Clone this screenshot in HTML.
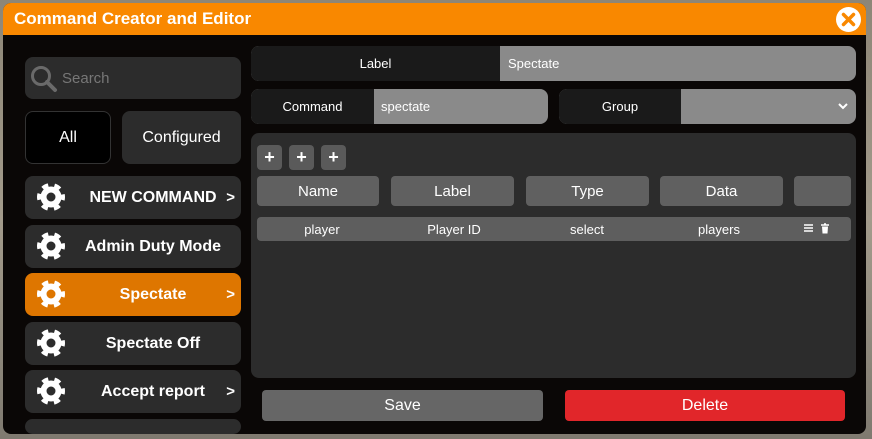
<!DOCTYPE html>
<html><head><meta charset="utf-8"><style>
*{margin:0;padding:0;box-sizing:border-box}
html,body{width:872px;height:439px;overflow:hidden}
body{background:linear-gradient(180deg,#8d8677,#a39b8b 50%,#7f7a70);font-family:"Liberation Sans",sans-serif;position:relative}
.win{position:absolute;left:3px;top:3px;width:863px;height:431px;background:#0a0706;border-radius:8px;overflow:hidden}
.title{position:absolute;left:0;top:0;width:100%;height:32px;background:#f98800;color:#fff;font-weight:bold;font-size:17px;line-height:32px;padding-left:11px}
.close{position:absolute;right:5px;top:4px;width:25px;height:25px;border-radius:50%;background:#fff}
.a{position:absolute}
.box{position:absolute;border-radius:8px}
.c{display:flex;align-items:center;justify-content:center;color:#fff}
.item{position:absolute;left:22px;width:216px;height:43px;background:#2c2c2c;border-radius:8px;color:#fff;font-weight:bold;font-size:16px}
.item .t{position:absolute;left:40px;right:0;top:0;height:43px;display:flex;align-items:center;justify-content:center}
.item svg{position:absolute;left:11px;top:6px}
.item .ar{position:absolute;right:6px;top:13px;font-size:15px;font-weight:bold}
.hd{position:absolute;top:173px;height:30px;background:#606060;border-radius:4px;color:#fff;font-size:15px}
.pl{position:absolute;top:142px;width:25px;height:25px;background:#5a5a5a;border-radius:4px;color:#fff;font-size:18px;font-weight:bold}
.cell{position:absolute;top:214px;height:24px;color:#fff;font-size:13px}
</style></head><body>
<svg width="0" height="0" style="position:absolute;left:0;top:0"><defs><g id="g"><circle cx="15" cy="15" r="11.5" fill="none" stroke="#fff" stroke-width="5" stroke-dasharray="6 6.04" stroke-dashoffset="3"/><circle cx="15" cy="15" r="7.5" fill="none" stroke="#fff" stroke-width="6"/></g></defs></svg>
<div class="win">
<div class="title">Command Creator and Editor</div>
<div class="close"><svg width="25" height="25"><path d="M7.5 7.5L17.5 17.5M17.5 7.5L7.5 17.5" stroke="#f98800" stroke-width="3.5" stroke-linecap="round"/></svg></div>

<div class="box" style="left:22px;top:54px;width:216px;height:42px;background:#2c2c2c"></div>
<svg class="a" style="left:26px;top:61px" width="30" height="30"><circle cx="12" cy="12" r="8.5" fill="none" stroke="#6a6a6a" stroke-width="3"/><path d="M18 18L26 26" stroke="#6a6a6a" stroke-width="4" stroke-linecap="round"/></svg>
<div class="a" style="left:59px;top:67px;color:#777;font-size:15px">Search</div>

<div class="box c" style="left:22px;top:108px;width:86px;height:53px;background:#000;border:1px solid #333;font-size:16px">All</div>
<div class="box c" style="left:119px;top:108px;width:119px;height:53px;background:#2c2c2c;font-size:16px">Configured</div>

<div class="item" style="top:173px"><svg width="30" height="30"><use href="#g"/></svg><div class="t">NEW COMMAND</div><div class="ar">&gt;</div></div>
<div class="item" style="top:222px"><svg width="30" height="30"><use href="#g"/></svg><div class="t">Admin Duty Mode</div></div>
<div class="item" style="top:270px;background:#de7600"><svg width="30" height="30"><use href="#g"/></svg><div class="t">Spectate</div><div class="ar">&gt;</div></div>
<div class="item" style="top:319px"><svg width="30" height="30"><use href="#g"/></svg><div class="t">Spectate Off</div></div>
<div class="item" style="top:367px"><svg width="30" height="30"><use href="#g"/></svg><div class="t">Accept report</div><div class="ar">&gt;</div></div>
<div class="item" style="top:416px;height:15px"></div>

<div class="box" style="left:248px;top:43px;width:605px;height:35px;background:#8a8a8a;overflow:hidden">
 <div class="a c" style="left:0;top:0;width:249px;height:35px;background:#1a1a1a;font-size:13px">Label</div>
 <div class="a" style="left:257px;top:10px;color:#fff;font-size:13px">Spectate</div>
</div>
<div class="box" style="left:248px;top:86px;width:297px;height:35px;background:#8a8a8a;overflow:hidden">
 <div class="a c" style="left:0;top:0;width:123px;height:35px;background:#1a1a1a;font-size:13px">Command</div>
 <div class="a" style="left:130px;top:10px;color:#fff;font-size:13px">spectate</div>
</div>
<div class="box" style="left:556px;top:86px;width:297px;height:35px;background:#8a8a8a;overflow:hidden">
 <div class="a c" style="left:0;top:0;width:122px;height:35px;background:#1a1a1a;font-size:13px">Group</div>
 <svg class="a" style="right:8px;top:13px" width="10" height="8"><path d="M1 2L5 6L9 2" fill="none" stroke="#fff" stroke-width="2"/></svg>
</div>

<div class="box" style="left:248px;top:130px;width:605px;height:245px;background:#2c2c2c"></div>
<div class="pl c" style="left:254px">+</div>
<div class="pl c" style="left:286px">+</div>
<div class="pl c" style="left:318px">+</div>
<div class="hd c" style="left:254px;width:122px">Name</div>
<div class="hd c" style="left:388px;width:123px">Label</div>
<div class="hd c" style="left:523px;width:123px">Type</div>
<div class="hd c" style="left:657px;width:123px">Data</div>
<div class="hd" style="left:791px;width:57px"></div>
<div class="box" style="left:254px;top:214px;width:594px;height:24px;background:#5e5e5e;border-radius:4px"></div>
<div class="cell c" style="left:254px;width:130px">player</div>
<div class="cell c" style="left:386px;width:130px">Player ID</div>
<div class="cell c" style="left:519px;width:130px">select</div>
<div class="cell c" style="left:651px;width:130px">players</div>
<svg class="a" style="left:800px;top:220px" width="30" height="12"><path d="M1 2h9M1 5h9M1 8h9" stroke="#fff" stroke-width="1.5"/><path d="M18 2h8M21 1h2" stroke="#fff" stroke-width="1.5"/><path d="M19 3.5h6l-0.5 7h-5z" fill="#fff"/></svg>

<div class="box c" style="left:259px;top:387px;width:281px;height:31px;background:#666;border-radius:4px;font-size:16px">Save</div>
<div class="box c" style="left:562px;top:387px;width:280px;height:31px;background:#e1262a;border-radius:4px;font-size:16px">Delete</div>
</div>
</body></html>
